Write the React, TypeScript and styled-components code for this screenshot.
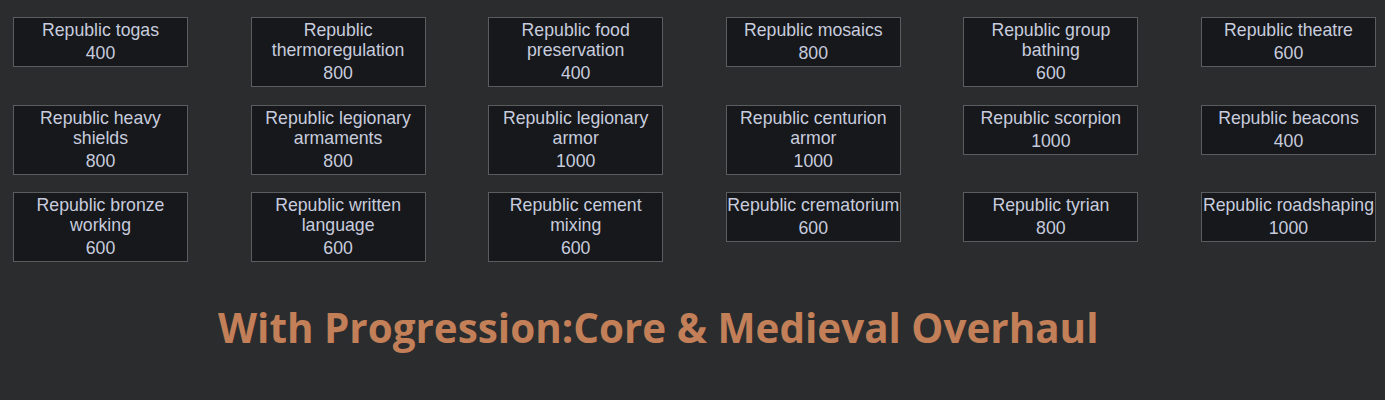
import React from 'react';
import styled, { createGlobalStyle } from 'styled-components';

type Tech = { name: string; cost: number };

const techRows: Tech[][] = [
  [
    { name: 'Republic togas', cost: 400 },
    { name: 'Republic thermoregulation', cost: 800 },
    { name: 'Republic food preservation', cost: 400 },
    { name: 'Republic mosaics', cost: 800 },
    { name: 'Republic group bathing', cost: 600 },
    { name: 'Republic theatre', cost: 600 },
  ],
  [
    { name: 'Republic heavy shields', cost: 800 },
    { name: 'Republic legionary armaments', cost: 800 },
    { name: 'Republic legionary armor', cost: 1000 },
    { name: 'Republic centurion armor', cost: 1000 },
    { name: 'Republic scorpion', cost: 1000 },
    { name: 'Republic beacons', cost: 400 },
  ],
  [
    { name: 'Republic bronze working', cost: 600 },
    { name: 'Republic written language', cost: 600 },
    { name: 'Republic cement mixing', cost: 600 },
    { name: 'Republic crematorium', cost: 600 },
    { name: 'Republic tyrian', cost: 800 },
    { name: 'Republic roadshaping', cost: 1000 },
  ],
];

const GlobalStyle = createGlobalStyle`
  html, body {
    margin: 0;
    padding: 0;
    background: #2a2c2e;
  }
`;

const Page = styled.div`
  width: 1385px;
  height: 400px;
  background: #2a2c2e;
  display: flex;
  flex-direction: column;
  overflow: hidden;
`;

const TechGrid = styled.div`
  display: grid;
  grid-template-columns: repeat(6, 175px);
  grid-auto-rows: 87.5px;
  column-gap: 62.6px;
  padding: 17px 0 0 13px;
  align-items: start;
`;

const TechCard = styled.div`
  box-sizing: border-box;
  width: 175px;
  background: #16181b;
  border: 1px solid #5b5c5d;
  padding: 2px 0 3px;
  display: flex;
  flex-direction: column;
  align-items: center;
  font-family: 'Liberation Sans', Arial, sans-serif;
  font-size: 17.7px;
  line-height: 20px;
  color: #c8ccde;
  text-align: center;
`;

const TechName = styled.div`
  padding: 0;
`;

const TechCost = styled.div`
  margin-top: 3px;
`;

const Caption = styled.h1`
  margin: 26px 0 0 218px;
  font-family: 'Open Sans', sans-serif;
  font-weight: 700;
  font-size: 40.4px;
  line-height: 44px;
  color: #c27f58;
  white-space: nowrap;
`;

const App = () => {
  return (
    <>
      <GlobalStyle />
      <Page>
        <TechGrid>
          {techRows.flat().map((t) => (
            <TechCard key={t.name}>
              <TechName>{t.name}</TechName>
              <TechCost>{t.cost}</TechCost>
            </TechCard>
          ))}
        </TechGrid>
        <Caption>With Progression:Core &amp; Medieval Overhaul</Caption>
      </Page>
    </>
  );
};

export default App;
